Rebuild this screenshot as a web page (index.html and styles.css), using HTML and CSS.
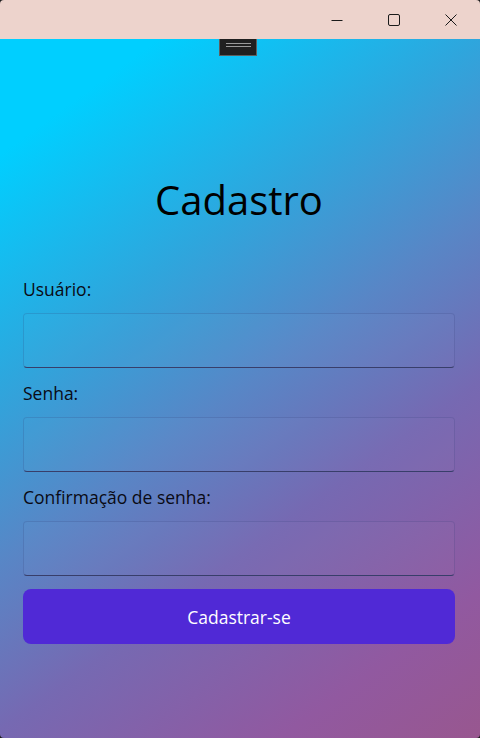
FILE: index.html
```html
<!DOCTYPE html>
<html lang="pt">
<head>
<meta charset="utf-8">
<title>Cadastro</title>
<link rel="stylesheet" href="styles.css">
</head>
<body>
<div class="window">
  <header class="titlebar">
    <div class="controls">
      <button class="ctl" aria-label="Minimizar">
        <svg width="12" height="12" viewBox="0 0 12 12"><path d="M0.5 6.5H11.5" stroke="#1a1a1a" stroke-width="1"/></svg>
      </button>
      <button class="ctl" aria-label="Maximizar">
        <svg width="12" height="12" viewBox="0 0 12 12"><rect x="0.5" y="0.5" width="11" height="11" rx="1.5" fill="none" stroke="#1a1a1a" stroke-width="1"/></svg>
      </button>
      <button class="ctl" aria-label="Fechar">
        <svg width="12" height="12" viewBox="0 0 12 12"><path d="M0.5 0.5L11.5 11.5M11.5 0.5L0.5 11.5" stroke="#1a1a1a" stroke-width="1"/></svg>
      </button>
    </div>
  </header>
  <main class="content">
    <div class="handle"><span class="grip"></span></div>
    <h1 class="title">Cadastro</h1>
    <form class="form">
      <label class="label" for="u">Usuário:</label>
      <input class="field" id="u" type="text">
      <label class="label" for="s">Senha:</label>
      <input class="field" id="s" type="password">
      <label class="label" for="c">Confirmação de senha:</label>
      <input class="field" id="c" type="password">
      <button class="submit" type="button">Cadastrar-se</button>
    </form>
  </main>
</div>
</body>
</html>
```
FILE: styles.css
```css
* { box-sizing: border-box; }
html, body { margin: 0; padding: 0; }
body {
  width: 480px;
  height: 738px;
  overflow: hidden;
  font-family: "Open Sans", "Noto Sans", sans-serif;
  background: #1c1c1c;
}
.window {
  display: flex;
  flex-direction: column;
  height: 738px;
  border-radius: 4px;
  overflow: hidden;
}
.titlebar {
  height: 39px;
  flex: none;
  background: #edd3cc;
  display: flex;
  justify-content: flex-end;
  padding-right: 1px;
}
.controls { display: flex; }
.ctl {
  width: 57px;
  height: 39px;
  border: 0;
  padding: 0;
  margin: 0;
  background: transparent;
  display: flex;
  align-items: center;
  justify-content: center;
}
.ctl svg { display: block; }

.content {
  flex: 1;
  position: relative;
  padding: 0 25px 0 23px;
  background: linear-gradient(144deg,
    #00cfff 0%,
    #00cfff 11%,
    #2ea6dd 33%,
    #5886c6 50%,
    #7669b2 66%,
    #9159a0 86%,
    #98578f 100%);
}
.handle {
  position: absolute;
  left: 219px;
  top: 0;
  width: 38px;
  height: 17px;
  background: #202020;
  border: 1px solid #5e5e5e;
  border-top: 0;
  display: flex;
  align-items: center;
  justify-content: center;
}
.grip {
  display: block;
  width: 25px;
  height: 4px;
  border-top: 1px solid #9a9a9a;
  border-bottom: 1px solid #9a9a9a;
  margin-top: -4px;
}
.title {
  margin: 136px 0 0;
  font-size: 40px;
  font-weight: 400;
  line-height: 50px;
  text-align: center;
  color: #000;
}
.form {
  display: flex;
  flex-direction: column;
  margin-top: 39px;
}
.label {
  font-size: 17.5px;
  line-height: 24px;
  color: #0a0a14;
  margin: 13px 0 12px;
}
.field {
  height: 55px;
  width: 100%;
  border: 1px solid rgba(40, 50, 110, 0.18);
  border-bottom: 1px solid #383e6a;
  border-radius: 4px;
  background: rgba(255, 255, 255, 0.02);
  font: inherit;
  outline: none;
}
.submit {
  margin-top: 13px;
  height: 55px;
  width: 100%;
  border: 0;
  border-radius: 8px;
  background: #5029d6;
  color: #fff;
  font-family: inherit;
  font-size: 17.5px;
}
```
